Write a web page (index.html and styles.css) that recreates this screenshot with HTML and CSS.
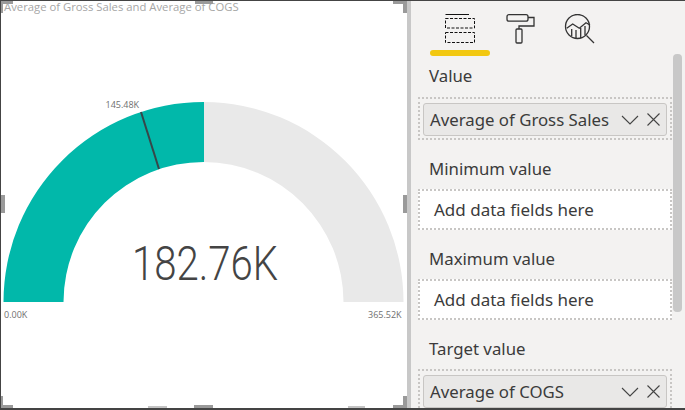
FILE: index.html
```html
<!DOCTYPE html>
<html lang="en">
<head>
  <meta charset="UTF-8">
  <title>Gauge visual</title>
  <link rel="stylesheet" href="styles.css">
</head>
<body>
  <div class="app">
    <div class="visual">
      <div class="visual-title">Average of Gross Sales and Average of COGS</div>
      <svg class="gauge" width="406" height="330" viewBox="0 0 406 330">
        <path d="M203 91 A200 200 0 0 1 402.5 291 L342.5 291 A140 140 0 0 0 203 151 Z" fill="#e9e9e9"/>
        <path d="M2.5 291 A200 200 0 0 1 203 91 L203 151 A140 140 0 0 0 62.5 291 Z" fill="#01b8aa"/>
        <line x1="140" y1="101" x2="158" y2="158" stroke="#374649" stroke-width="2"/>
        <text x="104.500" y="97" class="tick">145.48K</text>
        <text x="3" y="307" class="tick">0.00K</text>
        <text x="367" y="307" class="tick">365.52K</text>
        <text x="131" y="268.500" textLength="146" lengthAdjust="spacingAndGlyphs" class="callout">182.76K</text>
      </svg>
      <!-- resize handles -->
      <span class="handle corner-tl"></span>
      <span class="handle top-mid"></span>
      <span class="handle corner-tr"></span>
      <span class="handle left-mid"></span>
      <span class="handle right-mid"></span>
      <span class="handle corner-bl"></span>
      <span class="handle sliver sliver-a"></span>
      <span class="handle bottom-mid"></span>
      <span class="handle sliver sliver-b"></span>
      <span class="handle corner-br"></span>
    </div>

    <div class="pane">
      <div class="tabs">
        <div class="tab active">
          <svg width="32" height="32" viewBox="0 0 32 32" fill="none" stroke="#111" stroke-width="1">
            <path d="M1.500 0.500H25"/>
            <rect x="1.500" y="4.500" width="29" height="9.500" stroke-dasharray="3 1.500"/>
            <rect x="1.500" y="18.500" width="29" height="10" stroke-dasharray="3 1.500"/>
          </svg>
        </div>
        <div class="tab">
          <svg width="32" height="32" viewBox="0 0 32 32" fill="none" stroke="#333" stroke-width="1.300">
            <rect x="3" y="0.700" width="21" height="6.500" rx="2"/>
            <path d="M24 3.500H30V12H15V15"/>
            <rect x="12" y="15" width="6" height="14" rx="1"/>
          </svg>
        </div>
        <div class="tab">
          <svg width="34" height="34" viewBox="0 0 34 34" fill="none" stroke="#333" stroke-width="1.300">
            <circle cx="14.500" cy="12.500" r="12"/>
            <path d="M23.500 21.500L31 29"/>
            <path d="M3.700 14.300L9.700 10L16.300 14.300L23 8.700L27 11"/>
            <path d="M8.700 15V22M13 16V24M17.700 14V24M22 12V21"/>
          </svg>
        </div>
      </div>

      <div class="fields">
        <div class="field-label first">Value</div>
        <div class="well">
          <div class="pill">
            <span class="pill-name">Average of Gross Sales</span>
            <svg width="18" height="12" viewBox="0 0 18 12" fill="none" stroke="#444" stroke-width="1.100"><path d="M1 2L9 10L17 2"/></svg>
            <svg class="pill-x" width="13" height="13" viewBox="0 0 13 13" fill="none" stroke="#444" stroke-width="1.100"><path d="M0.500 0.500L12.500 12.500M12.500 0.500L0.500 12.500"/></svg>
          </div>
        </div>

        <div class="field-label">Minimum value</div>
        <div class="well empty">Add data fields here</div>

        <div class="field-label">Maximum value</div>
        <div class="well empty">Add data fields here</div>

        <div class="field-label">Target value</div>
        <div class="well">
          <div class="pill">
            <span class="pill-name">Average of COGS</span>
            <svg width="18" height="12" viewBox="0 0 18 12" fill="none" stroke="#444" stroke-width="1.100"><path d="M1 2L9 10L17 2"/></svg>
            <svg class="pill-x" width="13" height="13" viewBox="0 0 13 13" fill="none" stroke="#444" stroke-width="1.100"><path d="M0.500 0.500L12.500 12.500M12.500 0.500L0.500 12.500"/></svg>
          </div>
        </div>
      </div>
      <div class="scrollbar"></div>
    </div>
  </div>
</body>
</html>
```

FILE: styles.css
```css
html, body {
  margin: 0;
  height: 100%;
  overflow: hidden;
}
body {
  font-family: "Noto Sans", "Open Sans", sans-serif;
  background-color: #fff;
}
.app {
  display: flex;
  box-sizing: border-box;
  width: 685px;
  height: 410px;
  border-top: 1px solid #444;
  border-left: 1px solid #444;
  border-bottom: 2px solid #444;
  overflow: hidden;
}
.visual {
  position: relative;
  width: 406px;
  flex: none;
  background: #fff;
  border-right: 4px solid #c8c8c8;
}
.visual-title {
  font-family: "Open Sans", sans-serif;
  font-size: 11.300px;
  line-height: 12px;
  color: #a6a6a6;
  padding-left: 3px;
  white-space: nowrap;
}
.gauge {
  display: block;
  margin-top: -2px;
}
.tick {
  font-family: "Open Sans", sans-serif;
  font-size: 9px;
  fill: #707070;
}
.callout {
  font-family: "Roboto", sans-serif;
  font-weight: 300;
  font-size: 48.500px;
  fill: #444;
}
.handle {
  position: absolute;
  background: #9a9a9a;
}
.top-mid { top: 0; left: 194px; width: 18px; height: 3px; }
.bottom-mid { bottom: 0; left: 193px; width: 19px; height: 3px; }
.sliver { bottom: 0; height: 2px; background: #c4c4c4; }
.sliver-a { left: 147px; width: 19px; }
.sliver-b { left: 347px; width: 17px; }
.left-mid { left: 0; top: 194px; width: 4px; height: 18px; }
.right-mid { right: 0; top: 194px; width: 4px; height: 18px; }

/* corners are L shapes drawn with two borders */
.corner-tl, .corner-tr, .corner-bl, .corner-br {
  width: 10px;
  height: 9px;
  background: none;
  border: 0 solid #9a9a9a;
}
.corner-tl { top: 0; left: 0; border-top-width: 3px; border-left-width: 2px; }
.corner-tr { top: 0; right: 0; border-top-width: 3px; border-right-width: 4px; }
.corner-bl { bottom: 0; left: 0; border-bottom-width: 3px; border-left-width: 2px; }
.corner-br { bottom: 0; right: 0; border-bottom-width: 3px; border-right-width: 4px; }

.pane {
  position: relative;
  flex: 1;
  background-color: #f3f2f1;
}
.tabs {
  display: flex;
  padding: 13px 0 0 19px;
  height: 39px;
}
.tab {
  width: 60px;
  height: 42px;
  display: flex;
  justify-content: center;
  align-items: flex-start;
  position: relative;
}
.tab.active::after {
  content: "";
  position: absolute;
  left: 0;
  right: 0;
  bottom: 0;
  height: 6px;
  border-radius: 3px;
  background: #f2c811;
}
.fields {
  padding: 0 13px 0 7px;
}
.field-label {
  font-size: 16.800px;
  line-height: 22px;
  color: #3b3b3b;
  padding: 18px 0 9px 11px;
}
.field-label.first {
  padding: 12px 0 10px 11px;
}
.well {
  box-sizing: border-box;
  height: 43px;
  border: 2px dotted #c8c6c4;
  padding: 4px 3px;
}
.well.empty {
  height: 41px;
  background: #fff;
  font-size: 17px;
  line-height: 37px;
  padding: 0 0 0 14px;
  color: #3b3b3b;
}
.pill {
  display: flex;
  align-items: center;
  box-sizing: border-box;
  height: 33px;
  padding: 0 6px;
  background: #e9e8e7;
  border: 1px solid #c8c6c4;
  border-radius: 3px;
  font-size: 16.800px;
  color: #3b3b3b;
}
.pill-name {
  flex: 1;
  white-space: nowrap;
}
.pill-x {
  margin-left: 8px;
}
.scrollbar {
  position: absolute;
  top: 53px;
  right: 3px;
  width: 9px;
  height: 258px;
  border-radius: 4px;
  background: #c8c8c8;
}
```
